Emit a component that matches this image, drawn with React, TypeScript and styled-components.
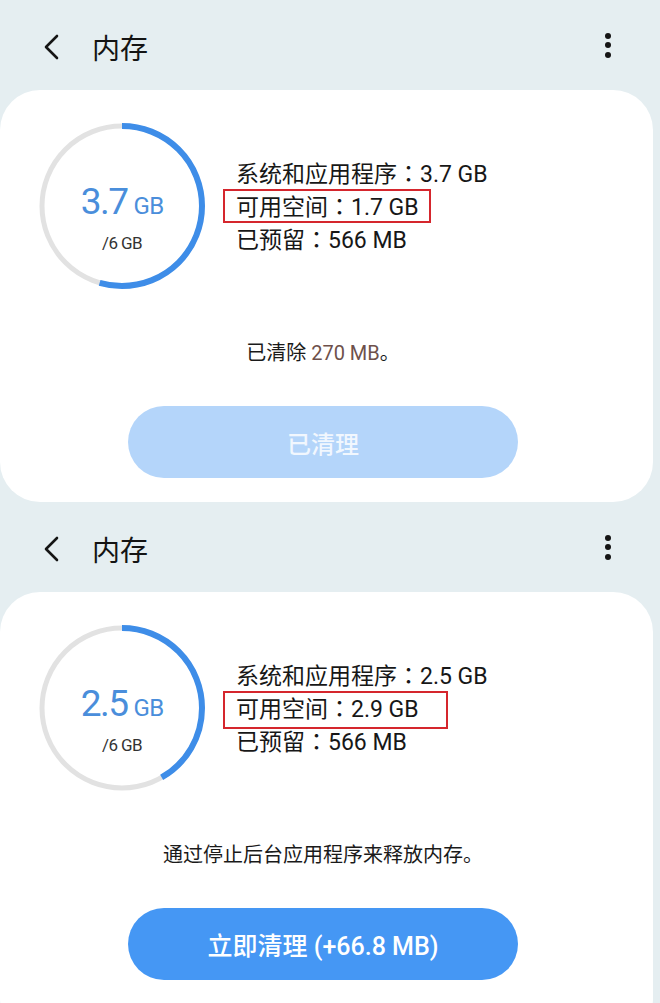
import React from "react";
import styled, { createGlobalStyle } from "styled-components";

const GlobalStyle = createGlobalStyle`
  html, body {
    margin: 0;
    padding: 0;
    background: #e5eef1;
    overflow: hidden;
  }
  body {
    font-family: Roboto, "Noto Sans CJK SC", sans-serif;
    color: #151515;
  }
`;

const Page = styled.div`
  display: flex;
  flex-direction: column;
  width: 660px;
`;

const Header = styled.header`
  height: 90px;
  display: flex;
  align-items: center;
  padding: 4px 49px 0 43px;
  box-sizing: border-box;
`;

const BackIcon = styled.svg`
  width: 16px;
  height: 26px;
  flex: none;
`;

const Title = styled.h1`
  margin: 0 0 0 33px;
  font-family: "Noto Sans CJK SC", sans-serif;
  font-size: 28px;
  font-weight: 400;
  color: #141414;
  flex: 1;
  line-height: 1;
`;

const Kebab = styled.div`
  display: flex;
  flex-direction: column;
  gap: 3.5px;
  margin-top: -4px;
`;

const Dot = styled.span`
  width: 6px;
  height: 6px;
  border-radius: 50%;
  background: #151515;
`;

const Card = styled.section<{ $last?: boolean }>`
  background: #ffffff;
  border-radius: 40px;
  margin-right: 7px;
  padding: 32px 7px ${(p) => (p.$last ? "60px" : "24px")} 0;
  display: flex;
  flex-direction: column;
  align-items: center;
`;

const Summary = styled.div`
  align-self: stretch;
  display: flex;
  align-items: center;
  padding-left: 39px;
  gap: 31px;
`;

const Gauge = styled.div`
  position: relative;
  width: 166px;
  height: 168px;
  flex: none;
  display: flex;
  flex-direction: column;
  align-items: center;
  justify-content: center;
  padding-top: 22px;
  box-sizing: border-box;
`;

const Ring = styled.svg`
  position: absolute;
  inset: 0;
  width: 166px;
  height: 168px;
`;

const Used = styled.div`
  display: flex;
  align-items: baseline;
  color: #4a8edb;
  line-height: 40px;
`;

const UsedValue = styled.span`
  font-family: Roboto, sans-serif;
  font-size: 37px;
  letter-spacing: -1.5px;
`;

const UsedUnit = styled.span`
  font-family: Roboto, sans-serif;
  font-size: 24px;
  letter-spacing: -0.8px;
  margin-left: 6px;
`;

const Total = styled.div`
  font-family: Roboto, sans-serif;
  font-size: 17px;
  letter-spacing: -0.6px;
  color: #333;
  line-height: 20px;
  margin-top: 7px;
`;

const Info = styled.div`
  display: flex;
  flex-direction: column;
`;

const Line = styled.div<{ $boxRight?: number; $boxBottom?: number }>`
  position: relative;
  width: fit-content;
  font-size: 23px;
  line-height: 31px;
  color: #171717;
  white-space: nowrap;

  ${(p) =>
    p.$boxRight !== undefined
      ? `
    &::after {
      content: "";
      position: absolute;
      top: -1px;
      left: -13px;
      right: -${p.$boxRight}px;
      bottom: -${p.$boxBottom ?? 0}px;
      border: 2px solid #d5262d;
    }
  `
      : ""}
`;

const Colon = styled.span`
  font-family: "Noto Sans CJK TC", sans-serif;
`;

const Message = styled.p`
  margin: 50px 0 0;
  font-size: 20px;
  line-height: 26px;
  color: #1a1a1a;
  text-align: center;
`;

const Amount = styled.span`
  color: #6e514b;
`;

const CleanButton = styled.button<{ $done?: boolean }>`
  margin-top: 40px;
  width: 390px;
  height: 72px;
  border: none;
  border-radius: 36px;
  background: ${(p) => (p.$done ? "#b4d5fa" : "#4597f4")};
  color: ${(p) => (p.$done ? "#f1f7fe" : "#ffffff")};
  font-family: Roboto, "Noto Sans CJK SC", sans-serif;
  font-size: ${(p) => (p.$done ? "24px" : "25px")};
  font-weight: 500;
  display: flex;
  align-items: center;
  justify-content: center;
  padding: 0;
`;

type Props = {
  used: string;
  fraction: number;
  system: string;
  free: string;
  boxRight: number;
  boxBottom: number;
  message: React.ReactNode;
  button: string;
  done?: boolean;
  last?: boolean;
};

const R = 80;
const C = 2 * Math.PI * R;

function MemoryPanel(p: Props) {
  return (
    <>
      <Header>
        <BackIcon viewBox="0 0 16 26">
          <polyline
            points="14,2 3,13 14,24"
            fill="none"
            stroke="#151515"
            strokeWidth="2.6"
            strokeLinecap="round"
            strokeLinejoin="round"
          />
        </BackIcon>
        <Title>内存</Title>
        <Kebab>
          <Dot />
          <Dot />
          <Dot />
        </Kebab>
      </Header>
      <Card $last={p.last}>
        <Summary>
          <Gauge>
            <Ring viewBox="0 0 166 168">
              <circle cx="83" cy="84" r={R} fill="none" stroke="#e2e2e2" strokeWidth="5" />
              <circle
                cx="83"
                cy="84"
                r={R}
                fill="none"
                stroke="#3e8de8"
                strokeWidth="6"
                strokeDasharray={`${C * p.fraction} ${C}`}
                transform="rotate(-90 83 84)"
              />
            </Ring>
            <Used>
              <UsedValue>{p.used}</UsedValue>
              <UsedUnit>GB</UsedUnit>
            </Used>
            <Total>/6 GB</Total>
          </Gauge>
          <Info>
            <Line>
              系统和应用程序<Colon>：</Colon>
              {p.system}
            </Line>
            <Line $boxRight={p.boxRight} $boxBottom={p.boxBottom}>
              可用空间<Colon>：</Colon>
              {p.free}
            </Line>
            <Line>
              已预留<Colon>：</Colon>566 MB
            </Line>
          </Info>
        </Summary>
        <Message>{p.message}</Message>
        <CleanButton $done={p.done}>{p.button}</CleanButton>
      </Card>
    </>
  );
}

export default function App() {
  return (
    <Page>
      <GlobalStyle />
      <MemoryPanel
        used="3.7"
        fraction={196 / 360}
        system="3.7 GB"
        free="1.7 GB"
        boxRight={12}
        boxBottom={0}
        message={
          <>
            已清除 <Amount>270 MB</Amount>。
          </>
        }
        button="已清理"
        done
      />
      <MemoryPanel
        used="2.5"
        fraction={150 / 360}
        system="2.5 GB"
        free="2.9 GB"
        boxRight={29}
        boxBottom={4}
        message="通过停止后台应用程序来释放内存。"
        button="立即清理 (+66.8 MB)"
        last
      />
    </Page>
  );
}
